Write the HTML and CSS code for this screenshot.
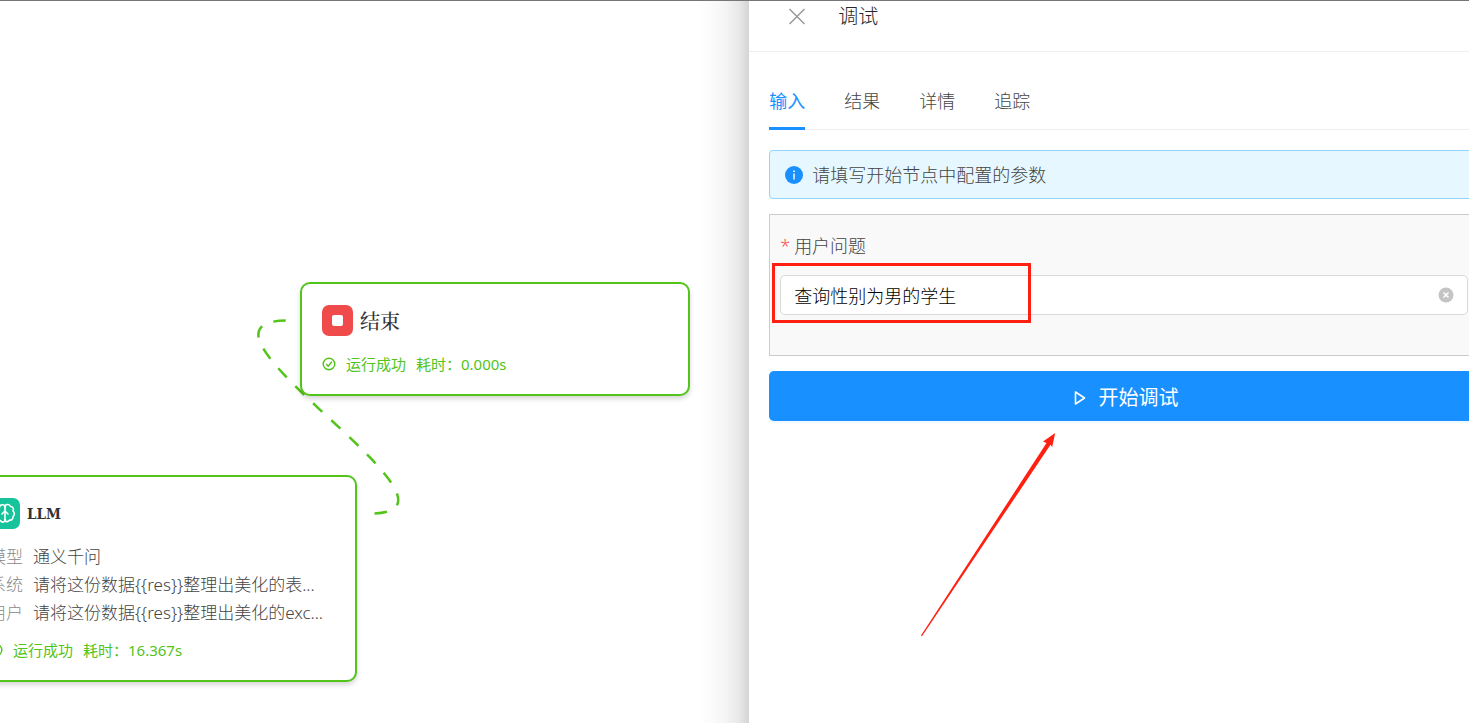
FILE: index.html
```html
<!DOCTYPE html>
<html lang="zh-CN">
<head>
<meta charset="utf-8">
<title>调试</title>
<link rel="stylesheet" href="styles.css">
</head>
<body>
<div class="app">
  <main class="canvas">
    <svg class="edges" width="749" height="722" viewBox="0 1 749 722" aria-hidden="true">
      <path d="M374.500 513.500C486 509 162 320 288 320.500" fill="none" stroke="#52c41a" stroke-width="2.500" stroke-dasharray="12.400 12.300"/>
    </svg>
    <section class="node node-end">
      <header class="node-head">
        <svg class="node-icon" viewBox="0 0 31 31" aria-hidden="true"><rect width="31" height="31" rx="7" fill="#f04b4b"/><rect x="10" y="10" width="11" height="11" rx="2" fill="#fff"/></svg>
        <h2 class="node-title">结束</h2>
      </header>
      <p class="status">
        <svg class="status-icon" viewBox="0 0 14 14" aria-hidden="true"><circle cx="7" cy="7" r="5.800"/><path d="M4.200 7l2 2.200 3.700-4.400"/></svg>
        <span>运行成功</span><span>耗时：0.000s</span>
      </p>
    </section>
    <section class="node node-llm">
      <header class="node-head">
        <svg class="node-icon" viewBox="0 0 31 31" aria-hidden="true"><rect width="31" height="31" rx="7" fill="#16c39a"/><g fill="none" stroke="#fff" stroke-width="1.600" stroke-linecap="round" stroke-linejoin="round"><path d="M16 9c0-3-5-3-5.500 0-3 .5-3.500 3-2.500 4.500-2 1.500-2 4 0 5.500-.5 2.500 1.500 4 3.500 3.500 1 2.500 4.500 2 4.500-.5z"/><path d="M16 9c0-3 4.500-3.500 5.500-.500 2.500 0 3.500 2.500 2.500 4.500 1.800 1.500 1.800 4 0 5.500.3 2.500-1.500 4-3.500 3.500-1 2.500-4.500 2-4.500-.5"/><path d="M13 16l3-3 3 3"/></g></svg>
        <h2 class="node-title latin">LLM</h2>
      </header>
      <dl class="props">
        <dt>模型</dt><dd>通义千问</dd>
        <dt>系统</dt><dd>请将这份数据{{res}}整理出美化的表...</dd>
        <dt>用户</dt><dd>请将这份数据{{res}}整理出美化的exc...</dd>
      </dl>
      <p class="status">
        <svg class="status-icon" viewBox="0 0 14 14" aria-hidden="true"><circle cx="7" cy="7" r="5.800"/><path d="M4.200 7l2 2.200 3.700-4.400"/></svg>
        <span>运行成功</span><span>耗时：16.367s</span>
      </p>
    </section>
  </main>

  <aside class="drawer">
    <header class="drawer-head">
      <button class="close" type="button" aria-label="关闭"><svg width="18" height="18" viewBox="0 0 18 18" aria-hidden="true"><path d="M1.500 1l15 15M16.500 1l-15 15" stroke="#999" stroke-width="1.500"/></svg></button>
      <h1 class="drawer-title">调试</h1>
    </header>
    <div class="drawer-body">
      <nav class="tabs" role="tablist">
        <button class="tab active" type="button" role="tab" aria-selected="true">输入</button>
        <button class="tab" type="button" role="tab" aria-selected="false">结果</button>
        <button class="tab" type="button" role="tab" aria-selected="false">详情</button>
        <button class="tab" type="button" role="tab" aria-selected="false">追踪</button>
      </nav>
      <div class="alert">
        <svg width="18" height="18" viewBox="0 0 18 18" aria-hidden="true"><circle cx="9" cy="9" r="9" fill="#1890ff"/><path d="M8.300 7.500h1.400v6H8.300zM8.200 4.500h1.600v1.600H8.200z" fill="#fff"/></svg>
        <span>请填写开始节点中配置的参数</span>
      </div>
      <form class="form">
        <div class="card">
          <label class="label" for="question"><span class="star">*</span>用户问题</label>
          <div class="field">
            <input class="input" id="question" type="text" value="查询性别为男的学生">
            <button class="clear" type="button" aria-label="清除"><svg width="16" height="16" viewBox="0 0 16 16" aria-hidden="true"><circle cx="8" cy="8" r="7.500" fill="#c4c4c4"/><path d="M5.500 5.500l5 5M10.500 5.500l-5 5" stroke="#fff" stroke-width="1.500"/></svg></button>
            <span class="highlight"></span>
          </div>
        </div>
        <button class="submit" type="button">
          <svg width="14" height="16" viewBox="0 0 14 16" aria-hidden="true"><path d="M2.500 2v12l9-6z" fill="none" stroke="#fff" stroke-width="1.600" stroke-linejoin="round"/></svg>
          <span>开始调试</span>
        </button>
      </form>
    </div>
    <svg class="arrow" width="136" height="205" viewBox="0 0 136 205" aria-hidden="true"><path d="M1 203.500L126.500 11 123 9.500 135.200 1 132.200 15 130.500 12.800 2 204.200z" fill="#ff2012"/></svg>
  </aside>
</div>
</body>
</html>
```
FILE: styles.css
```css
* { box-sizing: border-box; }
body {
  margin: 0;
  overflow: hidden;
  background: #fff;
  color: #444;
  font: 300 18px/24px "Noto Sans", "Noto Sans CJK SC", sans-serif;
}
h1, h2, p, dl, dd { margin: 0; }
button, input { font: inherit; color: inherit; }
button { border: 0; padding: 0; background: none; cursor: pointer; }
svg { display: block; flex: none; }

.app {
  display: flex;
  min-height: 100vh;
  border-top: 1px solid #777;
}

/* flow canvas */
.canvas { position: relative; flex: 1; min-width: 0; overflow: hidden; }
.edges { position: absolute; left: 0; top: 0; }
.node {
  position: absolute;
  width: 390px;
  padding: 21px 20px 19px;
  border: 2px solid #52c41a;
  border-radius: 10px;
  background: #fff;
  box-shadow: 0 3px 5px rgba(0, 0, 0, .16);
}
.node-end { left: 300px; top: 281px; }
.node-llm { left: -33px; top: 474px; }
.node-head { display: flex; align-items: center; gap: 7px; }
.node-icon { width: 31px; height: 31px; }
.node-title {
  color: #333;
  font: 500 20px/28px "Noto Serif CJK SC", "Noto Sans CJK SC", serif;
}
.node-title.latin { font: 700 15px/28px "DejaVu Serif Condensed", "DejaVu Serif", serif; }
.props {
  display: grid;
  grid-template-columns: auto 1fr;
  column-gap: 10px;
  margin-top: 14px;
  font-size: 17px;
  line-height: 28px;
  white-space: nowrap;
}
.props dt { color: #888; }
.status {
  display: flex;
  align-items: center;
  gap: 10px;
  margin-top: 17px;
  color: #52c41a;
  font-size: 15px;
  font-weight: 400;
  line-height: 22px;
}
.props + .status { margin-top: 12px; }
.status-icon { width: 14px; height: 14px; fill: none; stroke: #52c41a; stroke-width: 1.4; }

/* debug drawer */
.drawer {
  position: relative;
  flex: 0 0 49%;
  background: #fff;
}
.drawer::before {
  content: "";
  position: absolute;
  top: 0;
  bottom: 0;
  right: 100%;
  width: 50px;
  background: linear-gradient(to left, rgba(0, 0, 0, .17), rgba(0, 0, 0, .09) 20%, rgba(0, 0, 0, .04) 48%, rgba(0, 0, 0, .01) 80%, transparent);
  pointer-events: none;
}
.drawer-head {
  display: flex;
  align-items: center;
  gap: 32px;
  padding: 2px 39px 20px;
  border-bottom: 1px solid #eee;
}
.drawer-title { color: #262626; font-size: 20px; font-weight: 300; line-height: 28px; }
.drawer-body { margin-right: -10px; padding: 23px 0 0 20px; }
.tabs { display: flex; gap: 39px; box-shadow: inset 0 -1px #eee; }
.tab { height: 55px; border-bottom: 3px solid transparent; }
.tab.active { border-color: #1890ff; color: #1890ff; font-weight: 400; }
.alert {
  display: flex;
  align-items: center;
  gap: 9px;
  height: 49px;
  margin-top: 20px;
  padding: 0 15px;
  border: 1px solid #91d5ff;
  border-radius: 4px;
  background: #e6f7ff;
}
.card {
  margin-top: 15px;
  padding: 19px 10px 40px;
  border: 1px solid #ccc;
  background: #f9f9f9;
}
.label { display: flex; gap: 4px; }
.star { color: #ff4d4f; }
.field { position: relative; display: flex; margin-top: 17px; }
.input {
  flex: 1;
  min-width: 0;
  height: 40px;
  padding: 0 40px 0 13px;
  border: 1px solid #d9d9d9;
  border-radius: 5px;
  background: #fff;
  color: #000;
  outline: 0;
}
.clear { position: absolute; right: 14px; top: 12px; }
.highlight {
  position: absolute;
  left: -8px;
  top: -12px;
  width: 259px;
  height: 60px;
  border: 3px solid #ff2012;
  pointer-events: none;
}
.submit {
  display: flex;
  align-items: center;
  justify-content: center;
  gap: 12px;
  width: 100%;
  height: 50px;
  margin-top: 15px;
  padding: 3px 0 0 3px;
  border-radius: 5px;
  background: #1890ff;
  box-shadow: 0 2px rgba(24, 144, 255, .06);
  color: #fff;
  font-size: 20px;
  font-weight: 400;
}
.arrow { position: absolute; left: 171px; top: 431px; pointer-events: none; }
```
